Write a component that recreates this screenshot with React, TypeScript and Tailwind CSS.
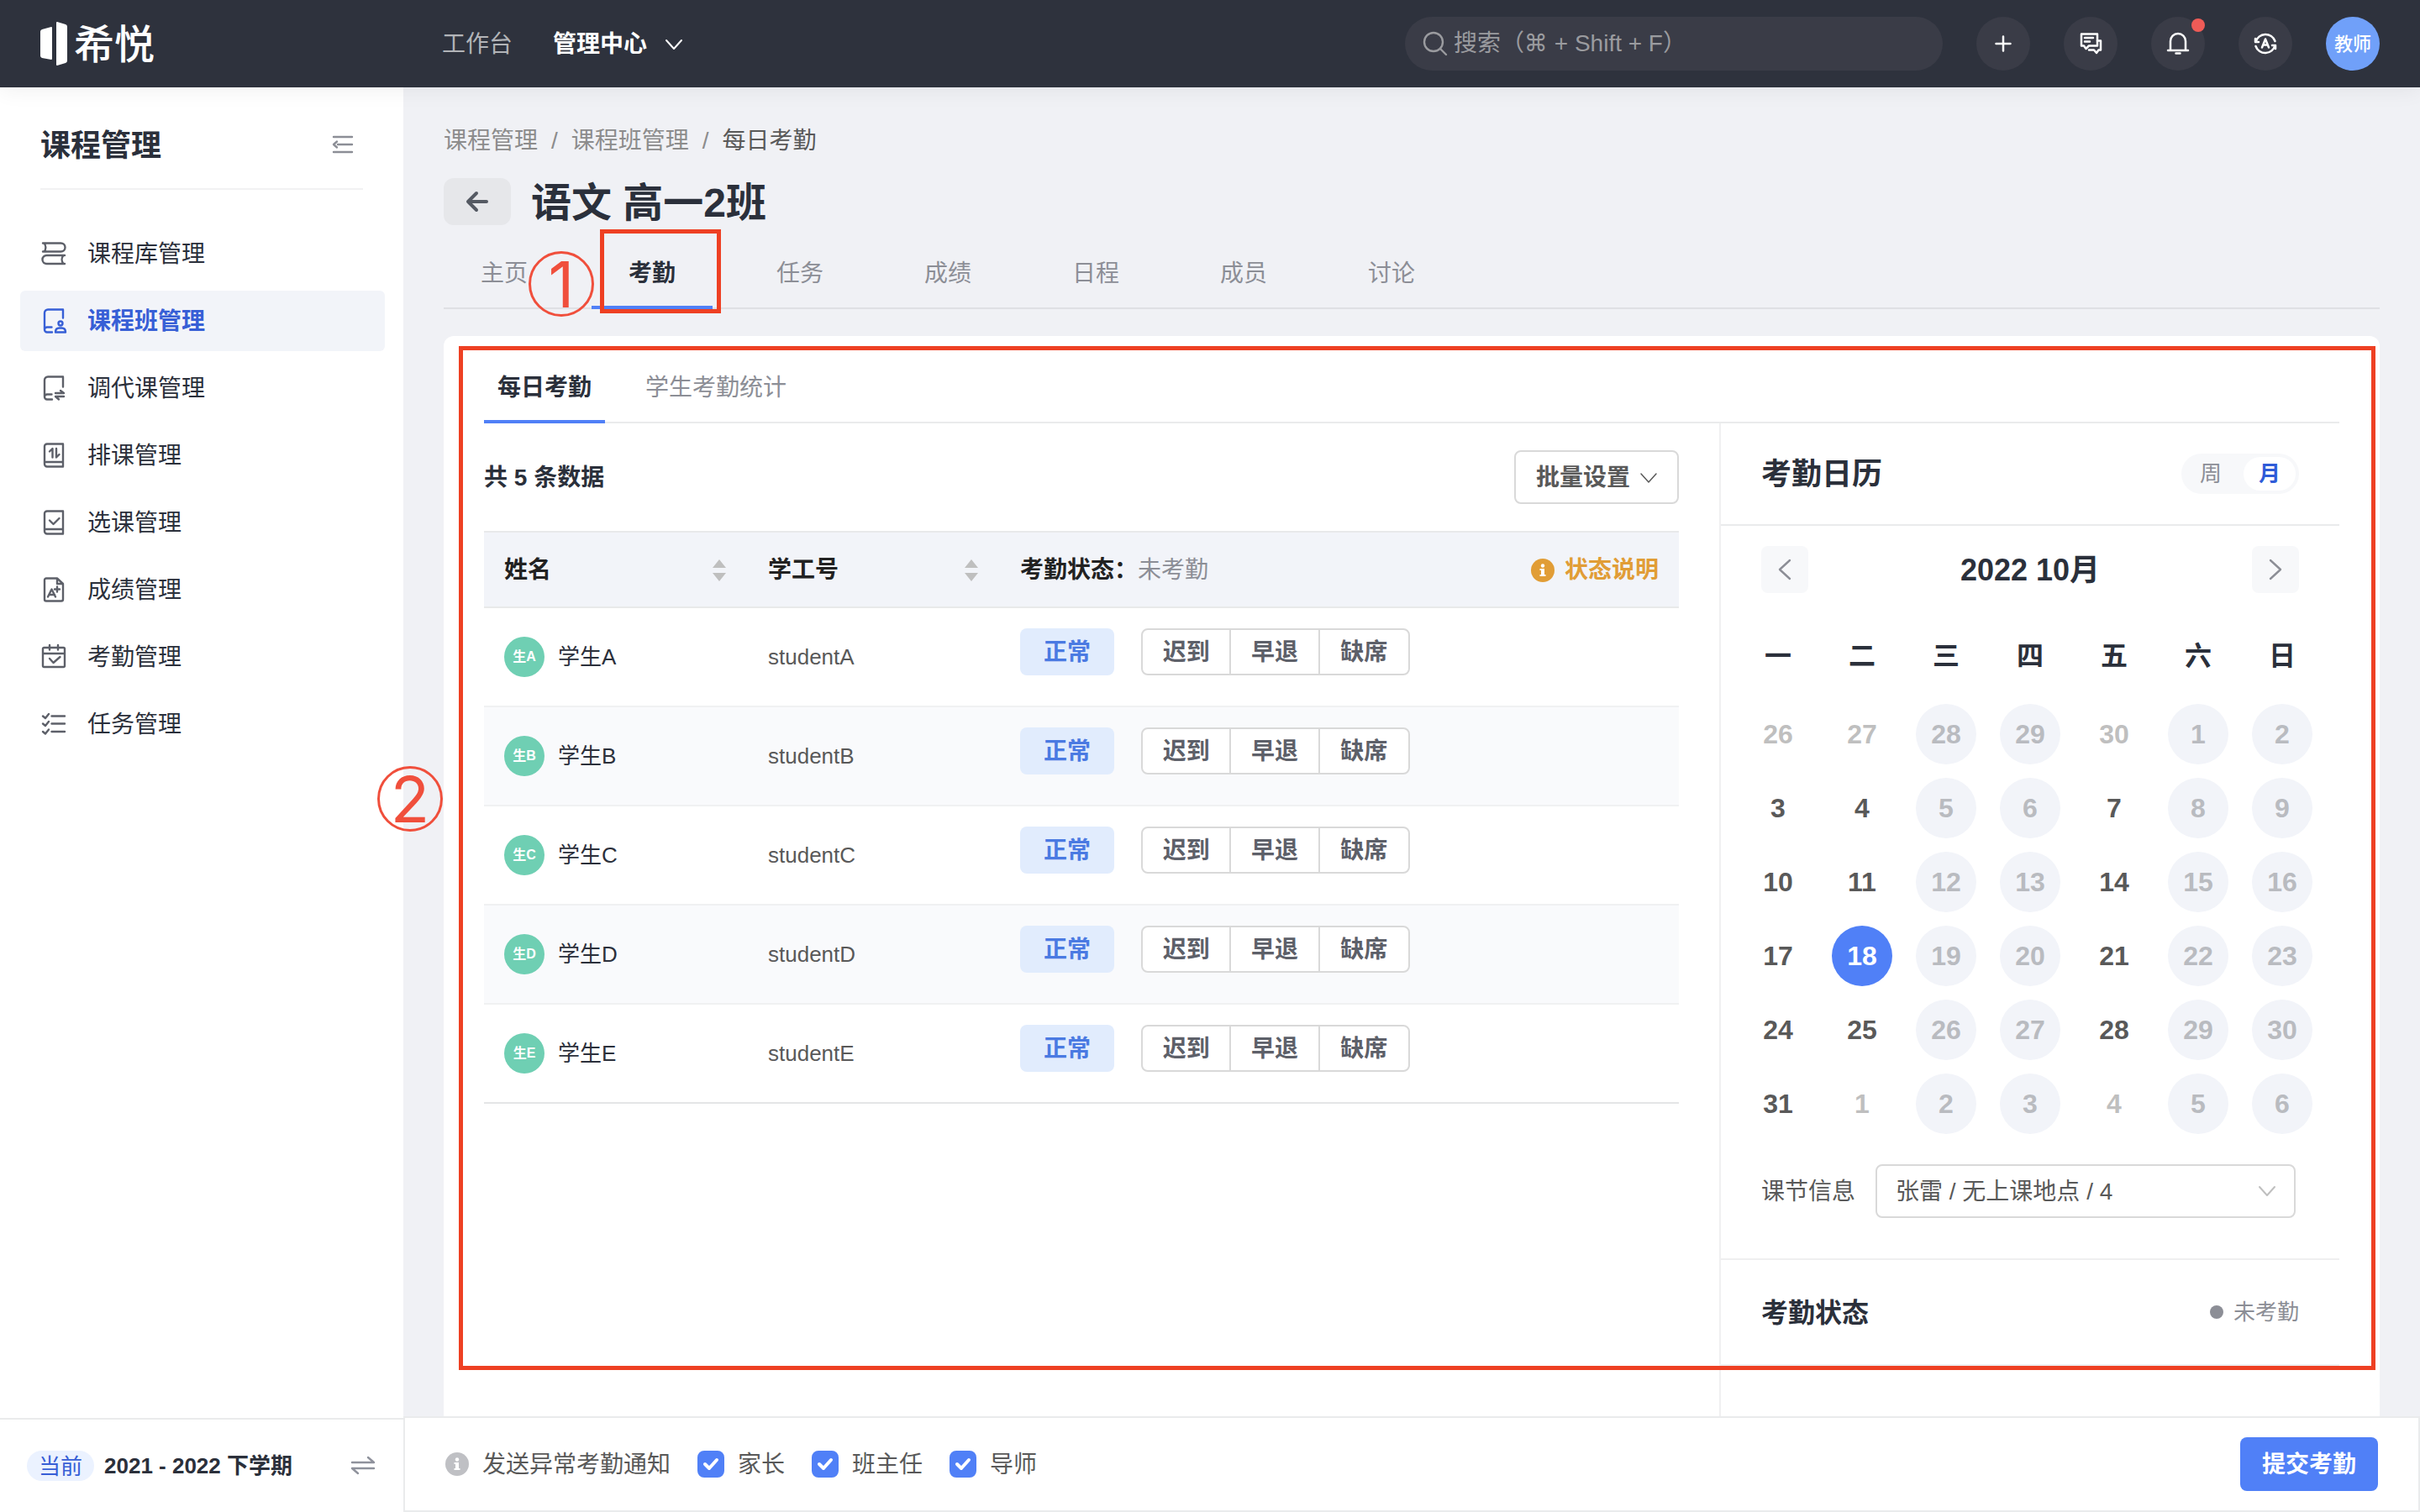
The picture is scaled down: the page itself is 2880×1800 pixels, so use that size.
import React, { useState } from 'react';
import clsx from 'clsx';

interface IconProps {
  className?: string;
}

interface MenuItem {
  label: string;
  icon: React.FC<IconProps>;
}

const Svg: React.FC<React.PropsWithChildren<IconProps & { box?: number; stroke?: number }>> = ({
  className,
  box = 28,
  stroke = 2.4,
  children,
}) => (
  <svg
    viewBox={`0 0 ${box} ${box}`}
    fill="none"
    stroke="currentColor"
    strokeWidth={stroke}
    strokeLinecap="round"
    strokeLinejoin="round"
    aria-hidden="true"
    className={clsx('shrink-0 overflow-visible', className)}
  >
    {children}
  </svg>
);

const BooksIcon: React.FC<IconProps> = ({ className }) => (
  <Svg className={className}>
    <path d="M1 1.500h21.500a4.500 4.500 0 0 1 0 10H1M2.500 1.500c2.500 3 2.500 7 0 10" />
    <path d="M27 16H5.500a4.500 4.500 0 0 0 0 10H27M25.500 16c-2.500 3-2.500 7 0 10" />
  </Svg>
);

const ClassIcon: React.FC<IconProps> = ({ className }) => (
  <Svg className={className}>
    <path d="M25 10.500V.5H7a4 4 0 0 0-4 4V24M11.500 21.500H6a3 3 0 0 0 0 6h6" />
    <circle cx="22" cy="17" r="2.500" />
    <path d="M16 27.500c0-4 2-5 4.500-5h3c2.500 0 4.500 1 4.500 5z" />
  </Svg>
);

const SwapClassIcon: React.FC<IconProps> = ({ className }) => (
  <Svg className={className}>
    <path d="M25 12.500V.5H7a4 4 0 0 0-4 4V24M11.500 21.500H6a3 3 0 0 0 0 6h6" />
    <path d="M16 20h10l-4-3M26 24H16l4 3.500" />
  </Svg>
);

const ScheduleIcon: React.FC<IconProps> = ({ className }) => (
  <Svg className={className}>
    <path d="M6 .5h19v27H6a3 3 0 0 1-3-3v-21a3 3 0 0 1 3-3zM3 22h22" />
    <path d="M9 9.500 12.500 6v10.500M17 6v10.500l3.500-3.500" />
  </Svg>
);

const SelectClassIcon: React.FC<IconProps> = ({ className }) => (
  <Svg className={className}>
    <path d="M6 .5h19v27H6a3 3 0 0 1-3-3v-21a3 3 0 0 1 3-3zM3 22h22" />
    <path d="m9 11.500 4.500 4.500 7-7" />
  </Svg>
);

const GradeIcon: React.FC<IconProps> = ({ className }) => (
  <Svg className={className}>
    <path d="M18 .5H5a2 2 0 0 0-2 2v23a2 2 0 0 0 2 2h18a2 2 0 0 0 2-2V7zM18 .5V7h7" />
    <path d="m7 22.500 4.500-9 4.500 9M8.500 20H15M18 10.500v6M15 13.500h6" />
  </Svg>
);

const AttendanceIcon: React.FC<IconProps> = ({ className }) => (
  <Svg className={className}>
    <path d="M2.500 3h23A1.500 1.500 0 0 1 27 4.500v20a1.500 1.500 0 0 1-1.500 1.500h-23A1.500 1.500 0 0 1 1 24.500v-20A1.500 1.500 0 0 1 2.500 3zM1 10h26M9 0v5.500M19 0v5.500" />
    <path d="m9 16 4.500 5 8-7" />
  </Svg>
);

const TaskIcon: React.FC<IconProps> = ({ className }) => (
  <Svg className={className}>
    <path d="M11.500 4.500H27M11.500 13.500H27M11.500 23H27M1 4.500 4 7l4-5M1 13.500 4 16l4-5M1 23l3 2.500 4-5" />
  </Svg>
);

const InfoIcon: React.FC<IconProps> = ({ className }) => (
  <svg viewBox="0 0 28 28" aria-hidden="true" className={clsx('size-7 shrink-0', className)}>
    <circle cx="14" cy="14" r="14" fill="currentColor" />
    <circle cx="14" cy="8.500" r="2.200" fill="#fff" />
    <path d="M10.500 12h5.500v7H17.500v2h-7v-2H12v-5h-1.500z" fill="#fff" />
  </svg>
);

const ChevronDown: React.FC<IconProps & { stroke?: number }> = ({ className, stroke = 2 }) => (
  <Svg box={20} stroke={stroke} className={className}>
    <path d="m1 5 9 10 9-10" />
  </Svg>
);

const SortIcon = () => (
  <svg viewBox="0 0 16 28" fill="#bfbfbf" aria-hidden="true" className="h-7 w-4">
    <path d="M8 1 16 11H0zM8 27 0 17h16z" />
  </svg>
);

const MENU: MenuItem[] = [
  { label: '课程库管理', icon: BooksIcon },
  { label: '课程班管理', icon: ClassIcon },
  { label: '调代课管理', icon: SwapClassIcon },
  { label: '排课管理', icon: ScheduleIcon },
  { label: '选课管理', icon: SelectClassIcon },
  { label: '成绩管理', icon: GradeIcon },
  { label: '考勤管理', icon: AttendanceIcon },
  { label: '任务管理', icon: TaskIcon },
];

const TABS = ['主页', '考勤', '任务', '成绩', '日程', '成员', '讨论'];
const STUDENTS = ['A', 'B', 'C', 'D', 'E'];
const WEEKDAYS = ['一', '二', '三', '四', '五', '六', '日'];
const WEEKS = [
  [26, 27, 28, 29, 30, 1, 2],
  [3, 4, 5, 6, 7, 8, 9],
  [10, 11, 12, 13, 14, 15, 16],
  [17, 18, 19, 20, 21, 22, 23],
  [24, 25, 26, 27, 28, 29, 30],
  [31, 1, 2, 3, 4, 5, 6],
];
const NOTIFY = ['家长', '班主任', '导师'];

// columns without a class are shown in a grey circle
const OFF_COLUMNS = [2, 3, 5, 6];

const Marker: React.FC<{ n: number; className: string }> = ({ n, className }) => (
  <span
    className={clsx(
      "absolute z-20 flex size-[78px] items-center justify-center rounded-full border-3 border-[#f04f3c] font-['Inter',sans-serif] text-[76px] leading-none font-normal text-[#f04f3c]",
      className,
    )}
  >
    {n}
  </span>
);

const Header = () => (
  <header className="relative z-10 flex h-[104px] shrink-0 items-center bg-[#2e323d] pr-12 text-[28px] shadow-[0_4px_24px_rgba(0,0,0,0.06)]">
    <a href="#" className="flex w-[480px] shrink-0 items-center gap-1.5 pl-12 text-white">
      <svg viewBox="0 0 34 52" fill="currentColor" aria-hidden="true" className="h-[52px] w-[34px]">
        <path d="M0 12a3 3 0 0 1 2-3l11-3a1 1 0 0 1 1 1v37a1 1 0 0 1-1 1L2 43a3 3 0 0 1-2-3zM19 1a1 1 0 0 1 1-1l10 3a3 3 0 0 1 2 3v40a3 3 0 0 1-2 3l-10 3a1 1 0 0 1-1-1z" />
      </svg>
      <span className="pt-1 text-[48px] leading-none font-medium">希悦</span>
    </a>
    <nav className="flex flex-1 items-center gap-12 pt-0.5 pl-[46px]">
      <a href="#" className="text-[#b2b4b8]">工作台</a>
      <a href="#" className="flex items-center gap-[22px] font-bold text-white">
        管理中心
        <ChevronDown className="size-5" />
      </a>
    </nav>
    <div className="flex items-center gap-10">
      <label className="flex h-16 w-[640px] items-center gap-1.5 rounded-full bg-[#3a3c47] px-5 text-[#9a9b9f]">
        <Svg className="size-8" box={32}>
          <circle cx="14" cy="14" r="11" />
          <path d="m22 22 7 7" />
        </Svg>
        <input
          type="search"
          aria-label="搜索"
          placeholder="搜索（⌘ + Shift + F）"
          className="w-full bg-transparent outline-none placeholder:text-[#9a9b9f]"
        />
      </label>
      <button aria-label="新建" className="flex size-16 items-center justify-center rounded-full bg-[#3a3c47] text-white">
        <Svg className="size-7" stroke={2.5}><path d="M14 5.500v17M5.500 14h17" /></Svg>
      </button>
      <button aria-label="消息" className="flex size-16 items-center justify-center rounded-full bg-[#3a3c47] text-white">
        <Svg className="size-7" stroke={2.5}>
          <path d="M3 2.500h19v14H12L8.500 20 6 16.500H3zM7 7h10M7 11.500h6" />
          <path d="M22 10.500h4v11h-2.500L21 25l-3-3.500h-6" />
        </Svg>
      </button>
      <button aria-label="通知" className="relative flex size-16 items-center justify-center rounded-full bg-[#3a3c47] text-white">
        <Svg className="size-7" stroke={2.5}>
          <path d="M2 22h24M5 22V11a9 9 0 0 1 18 0v11M11.500 25.500h5" />
        </Svg>
        <span className="absolute top-0.5 right-0 size-4 rounded-full bg-[#ef5b57]" />
      </button>
      <button aria-label="语言" className="flex size-16 items-center justify-center rounded-full bg-[#3a3c47] text-white">
        <Svg className="size-7" stroke={2.5}>
          <path d="M2.500 12A12 12 0 0 1 25.500 11M25.500 16A12 12 0 0 1 2.500 17M2 8v4h4M26 20v-4h-4" />
          <path d="m10 18.500 4-10 4 10M11.500 15.500h5" />
        </Svg>
      </button>
      <button className="flex size-16 items-center justify-center rounded-full bg-[#70a0f9] text-[22px] font-medium text-white">
        教师
      </button>
    </div>
  </header>
);

const Sidebar = () => (
  <aside className="flex w-[480px] shrink-0 flex-col bg-white">
    <div className="mx-12 flex h-[122px] items-center justify-between border-b-2 border-[#f2f2f3] pt-4 pr-3">
      <h2 className="pt-1 text-[36px] leading-none font-bold text-[#2b303b]">课程管理</h2>
      <button aria-label="收起" className="text-[#8c8e96]">
        <Svg className="size-6" box={24}>
          <path d="M1 3h22M6 12h17M1 21h22M5 8.500 1 12l4 3.500" />
        </Svg>
      </button>
    </div>
    <nav className="flex flex-1 flex-col gap-2 pt-10 pr-[22px] pl-6">
      {MENU.map(({ label, icon: Icon }, i) => (
        <a
          key={label}
          href="#"
          className={clsx(
            'flex h-[72px] items-center gap-[26px] rounded-md pl-[26px] text-[28px]',
            i === 1 ? 'bg-[#f2f4f9] font-bold text-[#375fd6]' : 'text-[#2b303b]',
          )}
        >
          <Icon className={clsx('size-7', i !== 1 && 'text-[#5d6069]')} />
          <span className="pt-0.5">{label}</span>
        </a>
      ))}
    </nav>
    <div className="flex h-[112px] items-center border-t-2 border-[#eaebec] pr-8 pl-8 text-[26px]">
      <span className="flex h-9 w-20 items-center justify-center rounded-full bg-[#ebf2ff] pt-0.5 text-[#375fd6]">当前</span>
      <span className="ml-3 flex-1 font-bold text-[#2b303b]">2021 - 2022 下学期</span>
      <button aria-label="切换学期" className="text-[#8f929c]">
        <Svg className="size-8" box={32}>
          <path d="M3 12h26l-7-6M29 19H3l7 6" />
        </Svg>
      </button>
    </div>
  </aside>
);

const AttendanceTable = () => (
  <table className="w-full table-fixed border-t-2 border-b-2 border-[#e8e9ea] text-left">
    <colgroup>
      <col className="w-[314px]" />
      <col className="w-[300px]" />
      <col />
    </colgroup>
    <thead className="bg-[#f2f4f9] text-[28px] text-[#222222]">
      <tr className="h-[90px] border-b-2 border-[#e8e9ea]">
        {['姓名', '学工号'].map((title) => (
          <th key={title} className="pt-0.5 pr-[26px] pl-6 font-bold">
            <button className="flex w-full items-center justify-between">
              {title}
              <SortIcon />
            </button>
          </th>
        ))}
        <th className="px-6 pt-0.5 font-bold">
          <div className="flex items-center justify-between">
            <span>
              考勤状态：<span className="font-normal text-[#8c8e96]">未考勤</span>
            </span>
            <button className="flex items-center gap-3 text-[#e19d36]">
              <InfoIcon />
              状态说明
            </button>
          </div>
        </th>
      </tr>
    </thead>
    <tbody>
      {STUDENTS.map((s) => (
        <tr key={s} className="h-[118px] border-b-2 border-[#f0f1f2] last:border-[#e4e5e6] even:bg-[#f9fafc]">
          <td className="px-6 text-[26px] text-[#2b303b]">
            <div className="flex items-center gap-4">
              <span className="flex size-12 items-center justify-center rounded-full bg-[#6fcfb3] text-[16px] font-bold text-white">
                生{s}
              </span>
              学生{s}
            </div>
          </td>
          <td className="px-6 text-[26px] text-[#595959]">student{s}</td>
          <td className="px-6 pt-6 align-top text-[28px] font-bold">
            <div className="flex gap-8">
              <button className="h-14 w-28 rounded-lg bg-[#e1ecfd] pt-0.5 text-[#4a7ae2]">正常</button>
              <div className="grid h-14 w-80 grid-cols-3 divide-x-2 divide-[#d9d9d9] rounded-lg border-2 border-[#d9d9d9] bg-white text-[#5d6069]">
                <button className="pt-0.5">迟到</button>
                <button className="pt-0.5">早退</button>
                <button className="pt-0.5">缺席</button>
              </div>
            </div>
          </td>
        </tr>
      ))}
    </tbody>
  </table>
);

const dayClass = (week: number, col: number, day: number) => {
  if (week === 3 && col === 1) return 'bg-[#5080f7] text-white';
  if (OFF_COLUMNS.includes(col)) return 'bg-[#f2f4f9] text-[#b9bbc0]';
  const outside = (week === 0 && day > 20) || (week === 5 && day < 10);
  return outside ? 'text-[#bfbfbf]' : 'text-[#595959]';
};

const Calendar = () => (
  <aside className="w-[738px] shrink-0 border-l-2 border-[#f0f0f1]">
    <div className="flex h-[122px] items-center justify-between border-b-2 border-[#eaebec] px-12">
      <h3 className="pt-0.5 text-[36px] font-bold text-[#2b303b]">考勤日历</h3>
      <div className="flex h-12 w-[140px] justify-between rounded-full bg-[#f7f8fa] p-1 text-[26px] leading-none">
        <button className="w-[62px] text-[#8c8e96]">周</button>
        <button className="w-[62px] rounded-full bg-white font-bold text-[#2f5cd8]">月</button>
      </div>
    </div>
    <div className="border-b-2 border-[#efeff0] pt-6 pb-12">
      <div className="flex items-center justify-between px-12">
        <button aria-label="上个月" className="flex size-14 items-center justify-center rounded-lg bg-[#f7f8fa] text-[#8c8e96]">
          <Svg className="size-7"><path d="M20 3 8 14l12 11" /></Svg>
        </button>
        <span className="pt-0.5 text-[36px] leading-none font-bold text-[#2b303b]">2022 10月</span>
        <button aria-label="下个月" className="flex size-14 items-center justify-center rounded-lg bg-[#f7f8fa] text-[#8c8e96]">
          <Svg className="size-7"><path d="m8 3 12 11L8 25" /></Svg>
        </button>
      </div>
      <div className="grid grid-cols-7 justify-items-center gap-y-4 px-[18px] pt-[34px] text-[32px] leading-none font-bold">
        {WEEKDAYS.map((d) => (
          <span key={d} className="flex h-[82px] items-center text-[#2b303b]">{d}</span>
        ))}
        {WEEKS.map((days, w) =>
          days.map((day, c) => (
            <button key={`${w}-${c}`} className={clsx('size-[72px] rounded-full', dayClass(w, c, day))}>
              {day}
            </button>
          )),
        )}
      </div>
      <div className="flex items-center gap-6 pt-9 pl-12 text-[28px] text-[#595959]">
        <label htmlFor="lesson" className="pt-0.5">课节信息</label>
        <div className="relative w-[500px]">
          <select id="lesson" className="h-16 w-full appearance-none rounded-lg border-2 border-[#d9d9d9] bg-white px-[22px] pt-0.5">
            <option>张雷 / 无上课地点 / 4</option>
          </select>
          <ChevronDown className="pointer-events-none absolute top-[22px] right-6 size-5 text-[#bfbfbf]" />
        </div>
      </div>
    </div>
    <div className="flex h-[126px] items-center justify-between border-b-2 border-[#efeff0] px-12">
      <h3 className="pt-0.5 text-[32px] font-bold text-[#2b303b]">考勤状态</h3>
      <span className="flex items-center gap-3 text-[26px] text-[#8c8e96]">
        <i className="size-4 rounded-full bg-[#8c8e96]" />
        未考勤
      </span>
    </div>
    <div className="px-12 pt-14 pb-16 text-[28px] text-[#595959]">备注</div>
  </aside>
);

const SubmitBar = () => (
  <footer className="relative z-10 flex h-[114px] shrink-0 items-center border-2 border-[#eaebec] bg-white pr-12 pl-12 text-[28px] text-[#595959]">
    <InfoIcon className="text-[#bfc0c4]" />
    <span className="ml-4 pt-0.5">发送异常考勤通知</span>
    {NOTIFY.map((name) => (
      <label key={name} className="ml-8 flex items-center gap-4">
        <span className="relative flex size-8">
          <input type="checkbox" defaultChecked className="peer size-8 appearance-none rounded-lg border-2 border-[#d9d9d9] checked:border-[#5080f7] checked:bg-[#5080f7]" />
          <Svg box={32} stroke={4} className="pointer-events-none absolute inset-0 size-8 text-white opacity-0 peer-checked:opacity-100">
            <path d="m9 16 5 5 9-10" />
          </Svg>
        </span>
        <span className="pt-0.5">{name}</span>
      </label>
    ))}
    <button className="ml-auto h-16 w-[164px] rounded-lg bg-[#5080f7] pt-0.5 font-bold text-white">提交考勤</button>
  </footer>
);

export default function App() {
  const [tab, setTab] = useState('考勤');

  return (
    <div className="flex h-screen flex-col overflow-hidden bg-[#f0f1f5] font-['Liberation_Sans','DejaVu_Sans','Noto_Sans_CJK_SC',sans-serif] leading-[1.5]">
      <Header />
      <div className="flex min-h-0 flex-1">
        <Sidebar />
        <div className="flex min-w-0 flex-1 flex-col">
          <main className="min-h-0 flex-1 px-12 pt-10">
            {/* Breadcrumb */}
            <nav className="flex h-12 items-center gap-4 text-[28px] text-[#8c8c8c]">
              <a href="#">课程管理</a>
              <span>/</span>
              <a href="#">课程班管理</a>
              <span>/</span>
              <span className="text-[#595959]">每日考勤</span>
            </nav>
            <div className="mt-5 flex h-14 items-center gap-6">
              <button aria-label="返回" className="flex h-14 w-20 items-center justify-center rounded-xl bg-[#e6e7ea] text-[#555a63]">
                <Svg className="size-7" stroke={4}><path d="M25 14H4M13 4 3 14l10 10" /></Svg>
              </button>
              <h1 className="pt-1 text-[48px] leading-none font-bold text-[#2b303b]">语文 高一2班</h1>
            </div>

            {/* Course tabs */}
            <div className="mt-3 flex h-[88px] gap-8 border-b-2 border-[#dfe0e4] text-[28px]">
              {TABS.map((name) => (
                <div key={name} className="relative">
                  <button
                    onClick={() => setTab(name)}
                    className={clsx(
                      'h-[88px] w-36 border-b-4 pt-2',
                      tab === name ? 'border-[#5080f7] font-bold text-[#2b303b]' : 'border-transparent text-[#8c8e96]',
                    )}
                  >
                    {name}
                  </button>
                  {name === '考勤' && (
                    <>
                      <span className="pointer-events-none absolute -top-[7px] left-2.5 h-[100px] w-36 border-5 border-[#ee4023]" />
                      <Marker n={1} className="top-[19px] -left-[75px]" />
                    </>
                  )}
                </div>
              ))}
            </div>

            {/* Attendance card */}
            <section className="relative mt-8 rounded-t-xl bg-white px-12">
              <div className="flex h-[104px] gap-8 border-b-2 border-[#eaebec] text-[28px]">
                <button className="h-[104px] border-b-4 border-[#5080f7] px-4 pt-6 font-bold text-[#2b303b]">每日考勤</button>
                <button className="h-[104px] border-b-4 border-transparent px-4 pt-6 text-[#8c8e96]">学生考勤统计</button>
              </div>
              <div className="flex">
                <div className="min-w-0 flex-1 pt-8 pr-12">
                  <div className="mb-8 flex h-16 items-center justify-between">
                    <strong className="pt-0.5 text-[28px] text-[#2b303b]">共 5 条数据</strong>
                    <button className="flex h-16 items-center gap-3 rounded-lg border-2 border-[#d9d9d9] px-6 pt-0.5 text-[28px] font-bold text-[#595959]">
                      批量设置
                      <ChevronDown className="size-5" stroke={1.5} />
                    </button>
                  </div>
                  <AttendanceTable />
                </div>
                <Calendar />
              </div>
              <span className="pointer-events-none absolute top-3 right-[5px] left-[18px] h-[1219px] border-5 border-[#ee4023]" />
              <Marker n={2} className="top-[512px] -left-[79px]" />
            </section>
          </main>
          <SubmitBar />
        </div>
      </div>
    </div>
  );
}
